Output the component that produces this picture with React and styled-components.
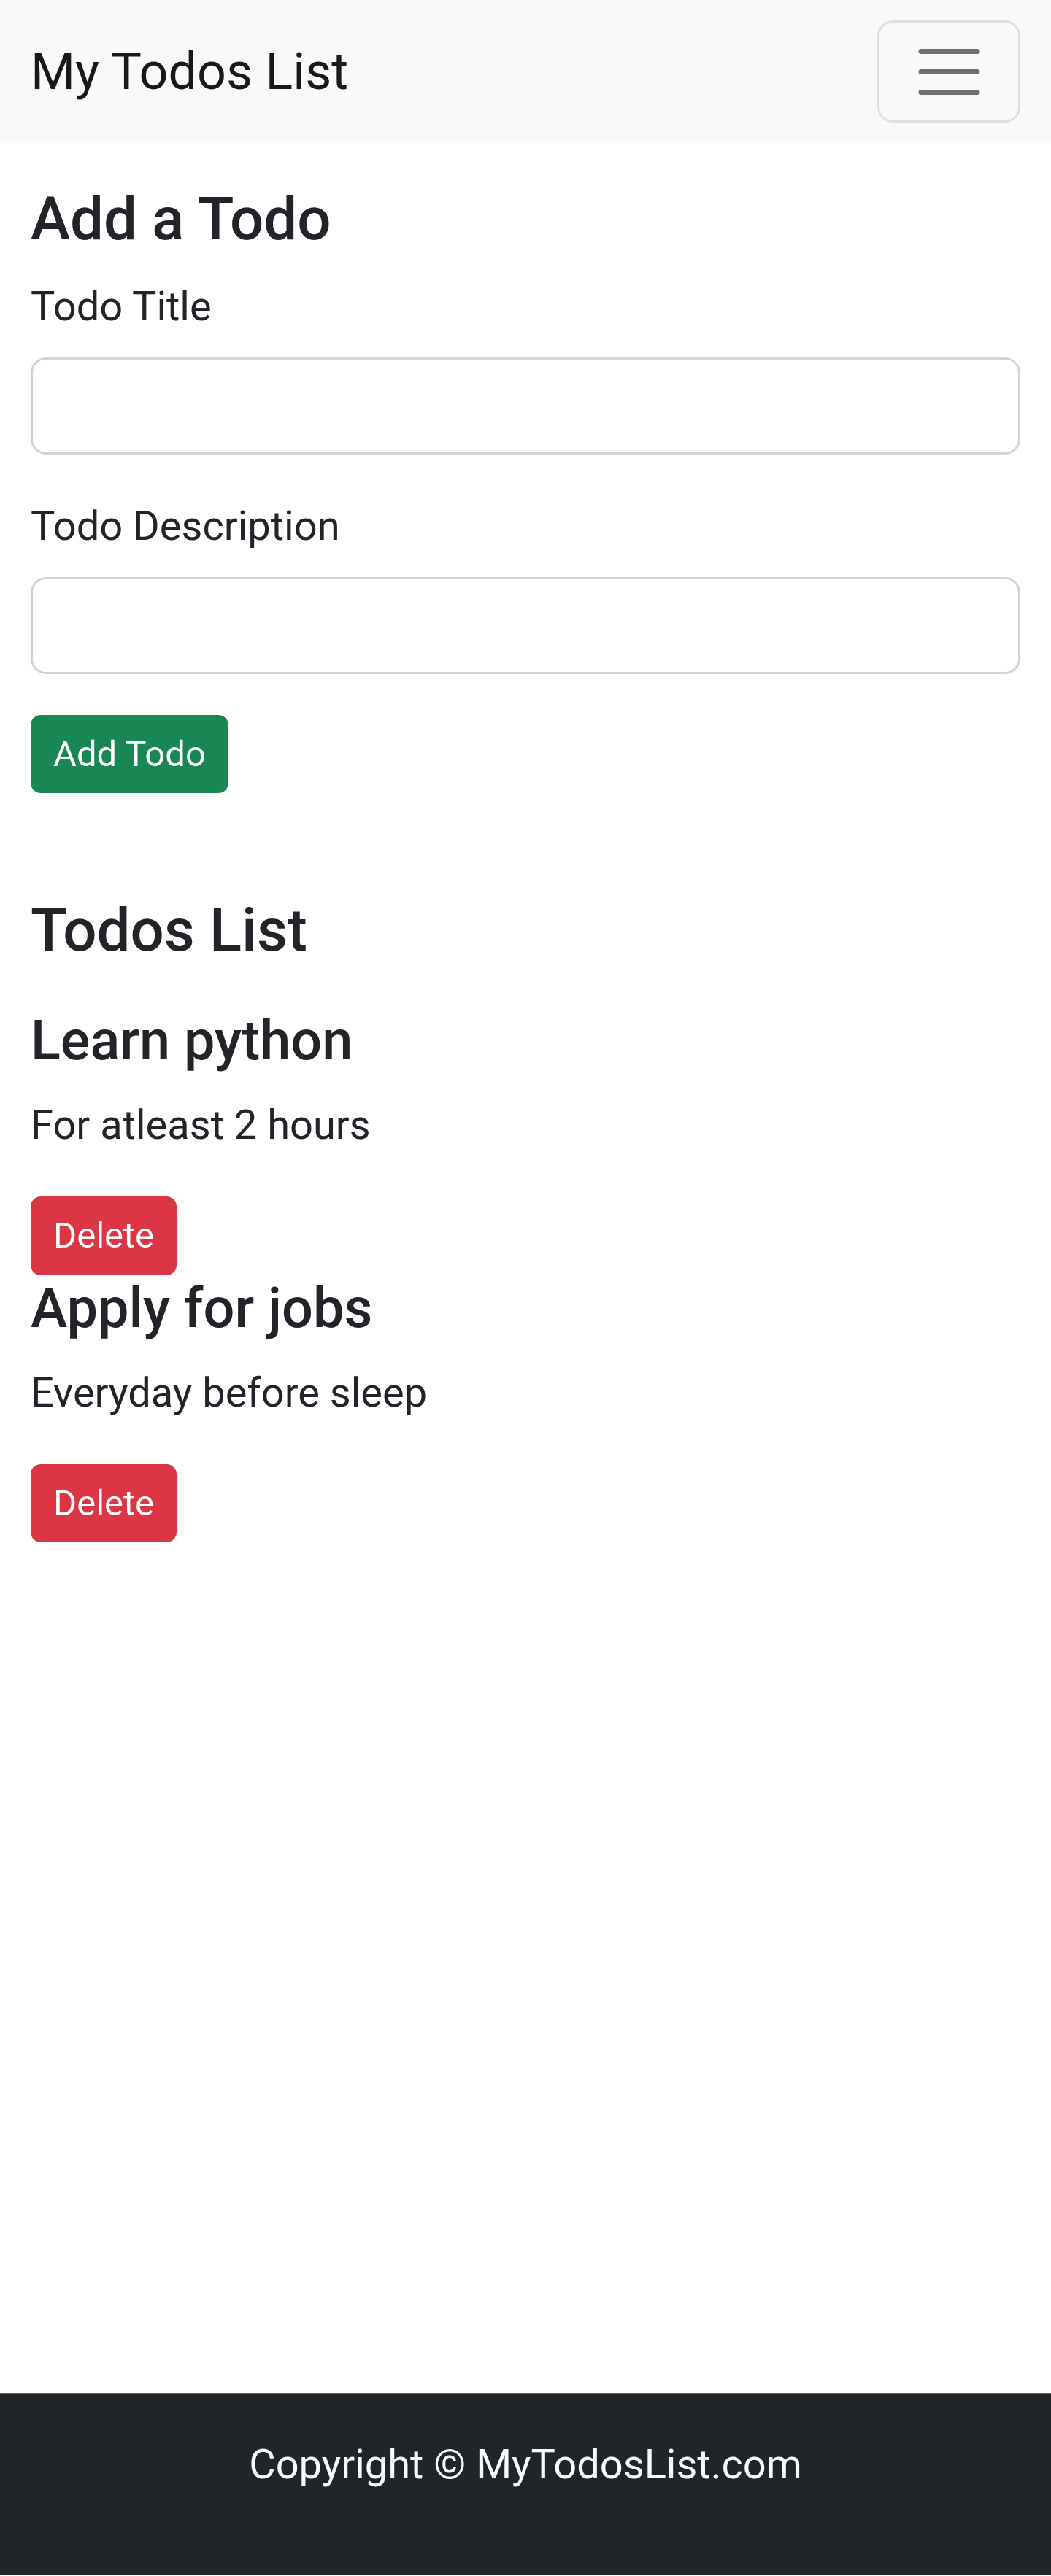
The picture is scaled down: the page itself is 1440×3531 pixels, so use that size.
import React from 'react';
import styled, { createGlobalStyle } from 'styled-components';

const GlobalStyle = createGlobalStyle`
  *, *::before, *::after {
    box-sizing: border-box;
  }
  body {
    margin: 0;
    font-family: Roboto, "Noto Sans", "Liberation Sans", sans-serif;
    font-size: 56px;
    line-height: 1.5;
    color: #212529;
    background: #fff;
  }
`;

const Navbar = styled.nav`
  display: flex;
  align-items: center;
  justify-content: space-between;
  padding: 28px 42px;
  background: #f8f9fa;
`;

const Brand = styled.a`
  font-size: 70px;
  line-height: 1.5;
  padding: 17.5px 0;
  color: rgba(0, 0, 0, 0.9);
  text-decoration: none;
`;

const Toggler = styled.button`
  display: flex;
  align-items: center;
  justify-content: center;
  width: 196px;
  height: 140px;
  padding: 0;
  background: transparent;
  border: 3.5px solid rgba(0, 0, 0, 0.1);
  border-radius: 21px;
`;

const Container = styled.div`
  padding: 0 42px;
  margin: ${(p) => p.$margin || '0'};
  min-height: ${(p) => p.$minHeight || 'auto'};
`;

const Heading = styled.h3`
  font-size: 81.6px;
  font-weight: 500;
  line-height: 1.2;
  margin: ${(p) => (p.$spaced ? '56px 0' : '0 0 28px')};
`;

const Field = styled.div`
  margin-bottom: 56px;
`;

const Label = styled.label`
  display: block;
  margin-bottom: 28px;
`;

const Input = styled.input`
  display: block;
  width: 100%;
  height: 133px;
  padding: 21px 42px;
  font: inherit;
  color: #212529;
  background: #fff;
  border: 3.5px solid #ced4da;
  border-radius: 21px;
  outline: none;
`;

const Button = styled.button`
  display: inline-block;
  font-family: inherit;
  font-size: 49px;
  line-height: 1.5;
  padding: 14px 28px;
  color: #fff;
  background: ${(p) => (p.$variant === 'danger' ? '#dc3545' : '#198754')};
  border: 3.5px solid ${(p) => (p.$variant === 'danger' ? '#dc3545' : '#198754')};
  border-radius: 14px;
  vertical-align: middle;
`;

const ItemTitle = styled.h4`
  font-size: 75.7px;
  font-weight: 500;
  line-height: 1.2;
  margin: 0 0 28px;
`;

const ItemDesc = styled.p`
  margin: 0 0 56px;
`;

const Footer = styled.footer`
  background: #212529;
  color: #f8f9fa;
  border-top: 1px solid #5b5e61;
  padding: 55px 0 54px;
`;

const FooterText = styled.p`
  text-align: center;
  margin: 0 0 56px;
`;

const TogglerIcon = () => (
  <svg width="105" height="105" viewBox="0 0 30 30">
    <path
      d="M4 7h22M4 15h22M4 23h22"
      stroke="rgba(0,0,0,0.55)"
      strokeWidth="2"
      strokeLinecap="round"
      strokeMiterlimit="10"
    />
  </svg>
);

const todos = [
  { sno: 1, title: 'Learn python', desc: 'For atleast 2 hours' },
  { sno: 2, title: 'Apply for jobs', desc: 'Everyday before sleep' },
];

const TodoItem = ({ todo }) => (
  <div>
    <ItemTitle>{todo.title}</ItemTitle>
    <ItemDesc>{todo.desc}</ItemDesc>
    <Button $variant="danger">Delete</Button>
  </div>
);

const App = () => (
  <>
    <GlobalStyle />
    <Navbar>
      <Brand href="#">My Todos List</Brand>
      <Toggler aria-label="Toggle navigation">
        <TogglerIcon />
      </Toggler>
    </Navbar>

    <Container $margin="56px 0">
      <Heading>Add a Todo</Heading>
      <form onSubmit={(e) => e.preventDefault()}>
        <Field>
          <Label htmlFor="title">Todo Title</Label>
          <Input id="title" type="text" />
        </Field>
        <Field>
          <Label htmlFor="desc">Todo Description</Label>
          <Input id="desc" type="text" />
        </Field>
        <Button type="submit">Add Todo</Button>
      </form>
    </Container>

    <Container $margin="140px 0" $minHeight="1912.5px">
      <Heading $spaced>Todos List</Heading>
      {todos.map((todo) => (
        <TodoItem key={todo.sno} todo={todo} />
      ))}
    </Container>

    <Footer>
      <FooterText>Copyright &copy; MyTodosList.com</FooterText>
    </Footer>
  </>
);

export default App;
